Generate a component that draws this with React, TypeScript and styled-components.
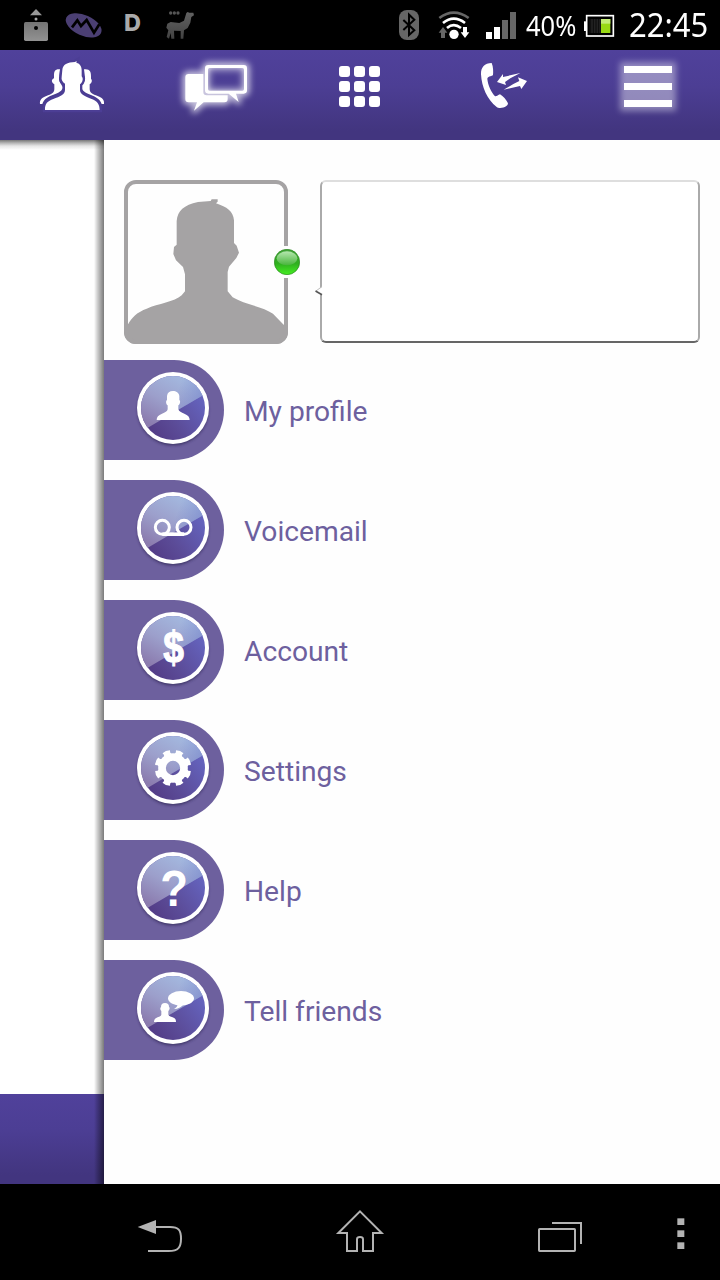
import React from "react";
import styled, { createGlobalStyle } from "styled-components";

const GlobalStyle = createGlobalStyle`
  * { box-sizing: border-box; }
  body { margin: 0; background: #fff; font-family: Roboto, "Liberation Sans", sans-serif; }
  svg { display: block; flex: none; }
`;

const barGradient = "linear-gradient(#50419b 0%, #4c3e94 40%, #42357f 90%, #42357f 100%)";

const Screen = styled.div`
  width: 720px;
  height: 1280px;
  display: flex;
  flex-direction: column;
  overflow: hidden;
  background: #fefefe;
`;

const StatusBar = styled.div`
  height: 50px;
  flex: none;
  display: flex;
  justify-content: space-between;
  padding: 0 0 0 20px;
  background: #000;
  color: #fff;
`;

const StatusGroup = styled.div`
  display: flex;
  align-items: center;
`;

const Space = styled.span<{ $w: number }>`
  width: ${(p) => p.$w}px;
  flex: none;
`;

const LetterBadge = styled.span`
  width: 30px;
  height: 50px;
  padding-left: 6px;
  font: 800 23.5px/46px Inter, sans-serif;
  color: #aaa;
`;

const StatusText = styled.span<{ $size: number; $w: number; $scale: number }>`
  width: ${(p) => p.$w}px;
  font-family: "Noto Sans", sans-serif;
  font-size: ${(p) => p.$size}px;
  line-height: 50px;
  height: 50px;
  transform: scaleX(${(p) => p.$scale});
  transform-origin: 0 50%;
  white-space: nowrap;
`;

const Tabs = styled.nav`
  height: 90px;
  flex: none;
  display: grid;
  grid-template-columns: repeat(5, 144px);
  background: ${barGradient};
`;

const Body = styled.div`
  flex: 1;
  display: flex;
  min-height: 0;
`;

const Behind = styled.div`
  width: 104px;
  flex: none;
  display: flex;
  flex-direction: column;
  position: relative;
  background: linear-gradient(#777 0, #b5b5b5 3px, #e6e6e6 6px, #fff 10px);

  &::after {
    content: "";
    position: absolute;
    inset: 0 0 0 auto;
    width: 10px;
    background: linear-gradient(90deg, rgba(0, 0, 0, 0), rgba(0, 0, 0, 0.22) 40%, rgba(0, 0, 0, 0.52));
  }
`;

const BehindFooter = styled.div`
  height: 90px;
  margin-top: auto;
  background: ${barGradient};
`;

const Panel = styled.main`
  flex: 1;
  padding-top: 40px;
`;

const Profile = styled.section`
  display: flex;
  padding: 0 20px;
  height: 180px;
`;

const Avatar = styled.div`
  position: relative;
  width: 164px;
  height: 164px;
`;

const Presence = styled.span`
  position: absolute;
  left: 147px;
  top: 66px;
  width: 32px;
  height: 32px;
  background: #fefefe;
  display: grid;
  place-items: center;
`;

const Bubble = styled.div`
  position: relative;
  flex: 1;
  height: 163px;
  margin-left: 32px;
  border: 2px solid #aaa;
  border-top-color: #dedede;
  border-bottom-color: #666;
  border-radius: 6px;
  background: #fff;
`;

const BubbleTail = styled.svg`
  position: absolute;
  left: -8px;
  top: 103px;
`;

const Menu = styled.ul`
  margin: 0;
  padding: 0;
  list-style: none;
  display: flex;
  flex-direction: column;
  gap: 20px;
`;

const MenuRow = styled.li`
  height: 100px;
  display: flex;
  gap: 20px;
`;

const MenuTab = styled.span`
  width: 120px;
  height: 100px;
  padding: 6px 0 0 27px;
  border-radius: 0 50px 50px 0;
  background: #6d609e;
`;

const MenuLabel = styled.span`
  font-size: 28.2px;
  line-height: 104px;
  color: #6d609e;
`;

const NavBar = styled.footer`
  height: 96px;
  flex: none;
  display: grid;
  grid-template-columns: 200px 200px 200px 60px;
  padding-left: 60px;
  background: #000;
`;

/* Artwork is drawn on a grid of three units per pixel. */
const Art = ({ box, children }: { box: string; children: React.ReactNode }) => {
  const [, , w, h] = box.split(" ").map(Number);
  return (
    <svg width={w / 3} height={h / 3} viewBox={box} fill="#fff">
      {children}
    </svg>
  );
};

const Disc = ({ children }: { children: React.ReactNode }) => (
  <Art box="-126 -126 252 252">
    <circle cy="6" r="106" fill="#241a48" filter="url(#soft)" opacity="0.65" />
    <circle r="108" />
    <circle r="96" fill="url(#discBase)" />
    <g clipPath="url(#discClip)">
      <path d="M-120 -120H120V-56L-120 85Z" fill="url(#discGloss)" />
      <path d="M-120 -120H120V-56L-120 85Z" fill="url(#discTint)" />
    </g>
    {children}
  </Art>
);

const Defs = () => (
  <svg width="0" height="0" style={{ position: "absolute" }}>
    <defs>
      <filter id="soft" x="-20%" y="-20%" width="140%" height="140%">
        <feGaussianBlur stdDeviation="5" />
      </filter>
      <filter id="glow" x="-40%" y="-50%" width="180%" height="200%">
        <feGaussianBlur stdDeviation="9" />
      </filter>
      <linearGradient id="discBase" x1="0.2" y1="0.95" x2="0.95" y2="0.4">
        <stop offset="0" stopColor="#533c86" />
        <stop offset="0.4" stopColor="#5b4b97" />
        <stop offset="1" stopColor="#6462bc" />
      </linearGradient>
      <linearGradient id="discGloss" gradientUnits="userSpaceOnUse" x1="20" y1="-90" x2="-60" y2="55">
        <stop offset="0" stopColor="#a3b7de" />
        <stop offset="0.5" stopColor="#9c9fcb" />
        <stop offset="1" stopColor="#8b7bae" />
      </linearGradient>
      <linearGradient id="discTint" gradientUnits="userSpaceOnUse" x1="10" y1="-40" x2="96" y2="-10">
        <stop offset="0" stopColor="#7886cb" stopOpacity="0" />
        <stop offset="1" stopColor="#7886cb" stopOpacity="0.8" />
      </linearGradient>
      <clipPath id="discClip"><circle r="96" /></clipPath>
      <clipPath id="avatarClip"><rect x="102" y="60" width="492" height="492" rx="36" /></clipPath>
      <linearGradient id="orb" x1="0" y1="0" x2="0" y2="1">
        <stop offset="0" stopColor="#43a23a" />
        <stop offset="0.55" stopColor="#2fae1f" />
        <stop offset="1" stopColor="#45ee22" />
      </linearGradient>
      <linearGradient id="orbShine" x1="0" y1="0" x2="0" y2="1">
        <stop offset="0" stopColor="#b4e6ae" />
        <stop offset="1" stopColor="#48b53b" />
      </linearGradient>
      <linearGradient id="grey" x1="0" y1="0" x2="0" y2="1">
        <stop offset="0" stopColor="#747474" />
        <stop offset="1" stopColor="#929292" />
      </linearGradient>
      <linearGradient id="llama" x1="0" y1="0" x2="0" y2="1">
        <stop offset="0" stopColor="#626262" />
        <stop offset="1" stopColor="#424242" />
      </linearGradient>
    </defs>
  </svg>
);

const chat = (
  <>
    <path d="M130 72H86Q76 72 76 82V147Q76 157 86 157H111L102 182L131 157H193Q203 157 203 147V136H140Q130 136 130 126Z" />
    <path fillRule="evenodd" d="M145 45H251Q261 45 261 55V121Q261 131 251 131H228L236 156L206 131H145Q135 131 135 121V55Q135 45 145 45ZM149 54Q144 54 144 59V117Q144 122 149 122H247Q252 122 252 117V59Q252 54 247 54Z" />
  </>
);

const bars = (
  <>
    <rect x="492" y="48" width="144" height="21" />
    <rect x="492" y="99" width="144" height="21" />
    <rect x="492" y="150" width="144" height="21" />
  </>
);

const head = "M0 -51C9 -51 18 -46 19 -36V-24C24 -20 20 -10 16 -8V4C18 10 25 14 34 17C45 21 50 27 50 36H-49C-49 27 -44 21 -33 17C-24 14 -17 10 -16 4V-8C-20 -10 -23 -20 -18 -24V-36C-17 -46 -10 -51 0 -51Z";

const menuItems = [
  { label: "My profile", icon: <path d={head} /> },
  {
    label: "Voicemail",
    icon: (
      <g fill="none" stroke="#fff" strokeWidth="9">
        <circle cx="-32" cy="-2" r="21" />
        <circle cx="33" cy="-2" r="21" />
        <path d="M-32 18.5H33" strokeWidth="11" />
      </g>
    ),
  },
  {
    label: "Account",
    icon: (
      <text transform="translate(2 44) scale(0.9 1.08)" textAnchor="middle" fontFamily="Liberation Sans, sans-serif" fontWeight="700" fontSize="124" stroke="#fff" strokeWidth="3">$</text>
    ),
  },
  {
    label: "Settings",
    icon: (
      <g>
        <circle r="33" fill="none" stroke="#fff" strokeWidth="23" />
        {[22.5, 67.5, 112.5, 157.5, 202.5, 247.5, 292.5, 337.5].map((a) => (
          <path key={a} transform={`rotate(${a})`} d="M-13 -38L-10 -46L-12 -53Q0 -58 12 -53L10 -46L13 -38Z" />
        ))}
      </g>
    ),
  },
  {
    label: "Help",
    icon: (
      <text transform="translate(3 54) scale(0.92 1)" textAnchor="middle" fontFamily="Liberation Sans, sans-serif" fontWeight="700" fontSize="148">?</text>
    ),
  },
  {
    label: "Tell friends",
    icon: (
      <g>
        <path d="M-24 -15C-16 -15 -12 -11 -12 -4C-8 0 -11 7 -14 9V20C-12 25 -5 26 2 29C8 31 9 36 9 42H-57C-57 36 -55 31 -49 29C-42 26 -36 24 -35 20V9C-39 6 -39 0 -36 -3C-36 -11 -32 -15 -24 -15Z" />
        <ellipse cx="24" cy="-29" rx="39" ry="22" />
        <path d="M14 -12C14 -6 9 0 3 3C15 2 25 -2 30 -10Z" />
      </g>
    ),
  },
];

export default function App() {
  return (
    <Screen>
      <GlobalStyle />
      <Defs />
      <StatusBar>
        <StatusGroup>
          <Art box="60 0 96 150">
            <path d="M108 27L126 46H90Z" fill="#999" />
            <circle cx="108" cy="57" r="4.5" fill="#aaa" />
            <rect x="72" y="66" width="72" height="57" rx="5" fill="url(#grey)" />
            <circle cx="108" cy="84" r="6" fill="#000" />
          </Art>
          <Space $w={8} />
          <Art box="180 0 150 150">
            <ellipse cx="251" cy="76" rx="57" ry="31" transform="rotate(24 251 76)" fill="#4b3f73" />
            <path d="M216 82L232 61L243 78L260 60L282 98L298 73" fill="none" stroke="#000" strokeWidth="8" />
          </Art>
          <Space $w={8} />
          <LetterBadge>D</LetterBadge>
          <Space $w={12} />
          <Art box="480 0 120 150">
            <g fill="#555">
              <circle cx="512" cy="39" r="5" /><circle cx="523" cy="39" r="5" /><circle cx="534" cy="39" r="5" />
            </g>
            <path fill="url(#llama)" d="M559 39L563 36L568 38L580 38L582 46L574 51L571 68L563 84L552 91L550 116L542 116L542 93L522 92L523 116L514 116L512 99L507 116L500 111L505 91L499 83L502 71L512 66L538 69L552 62Z" />
          </Art>
        </StatusGroup>
        <StatusGroup>
          <Art box="48 0 78 150">
            <rect x="57" y="30" width="60" height="90" rx="24" fill="#666" />
            <path d="M70 60L103 91L87 105V44L103 59L70 90" fill="none" stroke="#000" strokeWidth="6" />
          </Art>
          <Space $w={14} />
          <Art box="168 0 108 150">
            <g fill="none" strokeWidth="8">
              <path d="M178 54Q221 22 266 54" stroke="#666" />
              <path d="M189 69Q221 43 255 69" stroke="#fff" />
              <path d="M201 84Q221 67 243 84" stroke="#fff" />
            </g>
            <circle cx="222" cy="103" r="14" />
            <path d="M189 81L202 98H195V114H183V98H176Z" fill="#666" />
            <path d="M255 114L242 97H249V81H261V97H268Z" />
          </Art>
          <Space $w={12} />
          <Art box="312 0 102 150">
            <rect x="318" y="96" width="18" height="21" />
            <rect x="342" y="81" width="18" height="36" />
            <rect x="366" y="60" width="18" height="57" fill="#666" />
            <rect x="390" y="36" width="18" height="81" fill="#666" />
          </Art>
          <Space $w={8} />
          <StatusText $size={28} $w={56} $scale={0.91}>40%</StatusText>
          <Art box="606 0 102 150">
            <rect x="620" y="47" width="80" height="61" fill="none" stroke="#fff" strokeWidth="5" />
            <rect x="612" y="64" width="7" height="29" />
            <rect x="629" y="57" width="33" height="42" fill="#222" />
            <path d="M632 57V99M640 57V99M648 57V99M656 57V99" stroke="#000" strokeWidth="2" />
            <rect x="663" y="57" width="28" height="42" fill="#99d914" />
            <rect x="663" y="57" width="28" height="14" fill="#c4ec76" />
          </Art>
          <Space $w={13} />
          <StatusText $size={32.5} $w={91} $scale={0.955}>22:45</StatusText>
        </StatusGroup>
      </StatusBar>

      <Tabs>
        <Art box="0 150 432 270">
          <path d="M180 208C164 207 162 214 162 228V235C153 239 154 247 163 253V267C163 278 154 283 139 288C124 294 119 300 120 312H127C132 296 144 290 160 284C176 278 188 273 188 261C184 252 176 245 177 234Z" />
          <path d="M252 208C270 206 273 215 273 229V236C278 241 275 249 269 253V267C269 278 278 283 293 288C308 294 313 300 312 312H305C300 297 288 291 273 285C258 279 245 273 245 261C247 251 256 244 255 232Z" />
          <path
            stroke="#4c3e95"
            strokeWidth="14"
            paintOrder="stroke"
            d="M135 330C134 311 143 303 160 297C180 290 195 283 195 270V251C188 247 183 239 185 231L187 210C188 193 202 187 225 186L230 183L229 188C241 191 245 200 245 212V229C251 236 248 247 240 253V270C240 283 254 289 275 297C291 303 299 312 299 330Z"
          />
        </Art>
        <Art box="-48 0 432 270">
          <g filter="url(#glow)" stroke="#fff" strokeWidth="16" strokeLinejoin="round" opacity="0.7">{chat}</g>
          <rect x="149" y="58" width="98" height="60" rx="8" fill="#4d3f96" filter="url(#soft)" opacity="0.3" />
          {chat}
        </Art>
        <Art box="384 0 432 270">
          {[48, 93, 138].map((y) =>
            [537, 582, 627].map((x) => <rect key={`${x}-${y}`} x={x} y={y} width="33" height="33" rx="9" />)
          )}
        </Art>
        <Art box="-84 0 432 270">
          <path d="M95 39C74 39 62 52 63 73C65 112 82 149 110 171C116 176 131 174 138 169Q144 166 144 160C138 149 130 139 120 133C114 134 111 140 105 139C93 125 84 106 82 87C82 80 93 79 99 76C100 64 100 51 95 39Z" />
          <path d="M111 96L129 72V81L181 69L151 85L135 96L138 105Z" />
          <path d="M201 93L174 82L178 93L160 102L131 119L180 108L184 117Z" />
        </Art>
        <Art box="348 0 432 270">
          <rect x="480" y="36" width="168" height="147" filter="url(#glow)" opacity="0.4" />
          {bars}
        </Art>
      </Tabs>

      <Body>
        <Behind>
          <BehindFooter />
        </Behind>
        <Panel>
          <Profile>
            <Avatar>
              <Art box="102 60 492 492">
                <g clipPath="url(#avatarClip)" fill="#a5a3a4">
                  <path d="M102 552V495H113C125 472 142 456 170 446C205 431 253 426 275 406L285 394V343L279 321L258 301L250 282L252 261L260 254V183C263 151 281 136 324 126L362 123L365 118H383V125L378 130C411 141 429 153 432 181V249L440 257L447 278L439 294L417 320L413 336V394L428 412C460 432 519 440 549 461L581 494H594V552Z" />
                </g>
                <rect x="108" y="66" width="480" height="480" rx="30" fill="none" stroke="#a5a3a4" strokeWidth="12" />
              </Art>
              <Presence>
                <Art box="0 0 78 78">
                  <circle cx="39" cy="39" r="38" fill="url(#orb)" stroke="#27851c" strokeWidth="2" />
                  <ellipse cx="39" cy="28" rx="31" ry="21" fill="url(#orbShine)" />
                </Art>
              </Presence>
            </Avatar>
            <Bubble>
              <BubbleTail width="10" height="12" viewBox="0 0 10 12">
                <path d="M8 2L2 6L8 10L10 10V2Z" fill="#fff" />
                <path d="M8 1.5L2 6" stroke="#bbb" fill="none" />
                <path d="M1.5 6L8 9.7" stroke="#555" strokeWidth="1.6" fill="none" />
              </BubbleTail>
            </Bubble>
          </Profile>
          <Menu>
            {menuItems.map((item) => (
              <MenuRow key={item.label}>
                <MenuTab>
                  <Disc>{item.icon}</Disc>
                </MenuTab>
                <MenuLabel>{item.label}</MenuLabel>
              </MenuRow>
            ))}
          </Menu>
        </Panel>
      </Body>

      <NavBar>
        <Art box="180 312 600 288">
          <path d="M413 441L468 420V462Z" fill="#b3b3b3" />
          <path d="M466 441H510C536 441 543 450 543 476C543 502 535 513 506 513H444" fill="none" stroke="#b3b3b3" strokeWidth="6" />
        </Art>
        <Art box="780 312 600 288">
          <path d="M1080 394L1145 459H1119V513H1089V478Q1089 471 1080 471Q1071 471 1071 478V513H1041V459H1015Z" fill="none" stroke="#b3b3b3" strokeWidth="6" />
        </Art>
        <Art box="-120 12 600 288">
          <g fill="none" stroke="#b3b3b3" strokeWidth="6">
            <rect x="117" y="147" width="108" height="66" rx="2" />
            <path d="M156 129H243V192" />
          </g>
        </Art>
        <Art box="480 12 180 288">
          <g fill="#b3b3b3">
            <rect x="532" y="115" width="21" height="20" />
            <rect x="532" y="151" width="21" height="20" />
            <rect x="532" y="187" width="21" height="20" />
          </g>
        </Art>
      </NavBar>
    </Screen>
  );
}
